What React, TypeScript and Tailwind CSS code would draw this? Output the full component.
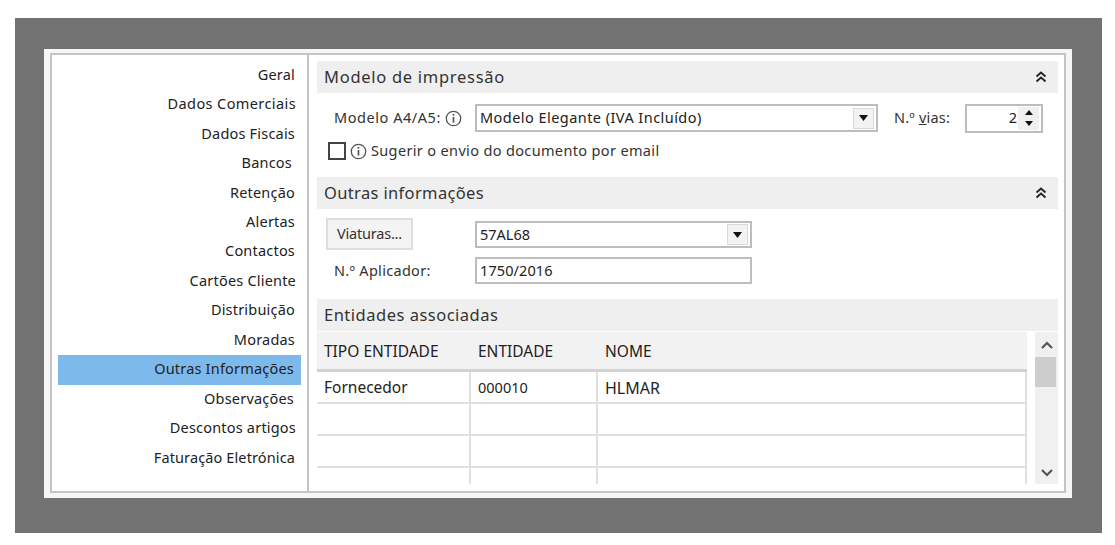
import React from 'react';

const menuItems = [
  { name: 'Geral', sty: 'pr-[6px]' },
  { name: 'Dados Comerciais', sty: 'pr-[5px] tracking-[0.4px]' },
  { name: 'Dados Fiscais', sty: 'pr-[6px]' },
  { name: 'Bancos', sty: 'pr-[9px]' },
  { name: 'Retenção', sty: 'pr-[6px]' },
  { name: 'Alertas', sty: 'pr-[6px]' },
  { name: 'Contactos', sty: 'pr-[6px]' },
  { name: 'Cartões Cliente', sty: 'pr-[5px]' },
  { name: 'Distribuição', sty: 'pr-[6px]' },
  { name: 'Moradas', sty: 'pr-[6px]' },
  { name: 'Outras Informações', sty: 'pr-[7px] tracking-[0.1px]', active: true },
  { name: 'Observações', sty: 'pr-[7px]' },
  { name: 'Descontos artigos', sty: 'pr-[5px]' },
  { name: 'Faturação Eletrónica', sty: 'pr-[6px] tracking-[0.12px]' },
];

const Info = () => (
  <svg width="17" height="17" viewBox="0 0 17 17" fill="none" className="shrink-0">
    <circle cx="8.5" cy="8.5" r="7.2" stroke="#555" strokeWidth="1.3" />
    <rect x="7.6" y="7" width="1.7" height="5.6" fill="#555" />
    <rect x="7.6" y="4" width="1.7" height="1.7" fill="#555" />
  </svg>
);

const Collapse = () => (
  <svg width="12" height="12" viewBox="0 0 12 12" fill="none" stroke="#222" strokeWidth="1.8">
    <path d="M1.5 5.5 6 1.5l4.5 4" />
    <path d="M1.5 10.5 6 6.5l4.5 4" />
  </svg>
);

const DropBtn = () => (
  <div className="flex h-full w-[21px] items-center justify-center border border-[#d9d9d9] bg-[#f3f3f3]">
    <svg width="9" height="6" viewBox="0 0 9 6"><path d="M0 0h9L4.5 6z" fill="#111" /></svg>
  </div>
);

const Section = ({ title, collapse, sty }: { title: string; collapse?: boolean; sty: string }) => (
  <div className={`flex h-[32px] items-center justify-between bg-[#efefef] pl-[7px] pr-[11px] text-[16.5px] text-[#333] ${sty}`}>
    <span>{title}</span>
    {collapse && <Collapse />}
  </div>
);

const rows = [['Fornecedor', '000010', 'HLMAR'], ['', '', ''], ['', '', '']];

const App = () => {
  return (
    <div className="h-[545px] w-[1115px] overflow-hidden bg-white pl-[15px] pt-[18px] text-[14.5px] text-[#222]" style={{ fontFamily: '"Noto Sans", "Open Sans", sans-serif' }}>
      <div className="h-[515px] w-[1087px] bg-[#727272] pl-[29px] pt-[31px]">
        <div className="h-[449px] w-[1028px] bg-[#f6f6f6] pl-[6px] pt-[4px]">
          <div className="flex h-[440px] w-[1016px] border-2 border-[#c4c4c4] bg-white">
            {/* 左侧导航 */}
            <div className="w-[257px] shrink-0 border-r-2 border-[#c4c4c4] pl-[6px] pr-[6px] pt-[6px]">
              {menuItems.map((item, index) => (
                <div
                  key={index}
                  className={`flex h-[29.45px] items-center justify-end pb-[2px] tracking-[0.2px] ${item.sty} ${item.active ? 'bg-[#7eb9eb]' : ''}`}
                >
                  {item.name}
                </div>
              ))}
            </div>

            <div className="w-[755px] shrink-0 pl-[8px] pr-[6px] pt-[6px]">
              <Section title="Modelo de impressão" collapse sty="tracking-[0.72px]" />

              <div className="mt-[11px] flex h-[28px] items-center pl-[17px]">
                <span className="w-[124px] tracking-[0.55px] text-[#333]">Modelo A4/A5:</span>
                <div className="-ml-[13px] mr-[13px]"><Info /></div>
                <div className="flex h-[28px] w-[403px] shrink-0 items-center justify-between border-2 border-[#bdbdbd] pl-[3px] pr-[2px] tracking-[0.45px]">
                  <span>Modelo Elegante (IVA Incluído)</span>
                  <div className="h-[21px]"><DropBtn /></div>
                </div>
                <span className="ml-[16px] w-[71px] tracking-[0.2px] text-[#333]">N.º <u>v</u>ias:</span>
                <div className="flex h-[29px] w-[78px] items-center justify-end border-2 border-[#bdbdbd] pr-[2px]">
                  <span className="mr-[1px]">2</span>
                  <div className="flex h-[23px] w-[21px] flex-col items-center justify-around bg-[#f0f0f0]">
                    <svg width="8" height="5" viewBox="0 0 8 5"><path d="M0 5h8L4 0z" fill="#111" /></svg>
                    <svg width="8" height="5" viewBox="0 0 8 5"><path d="M0 0h8L4 5z" fill="#111" /></svg>
                  </div>
                </div>
              </div>

              <div className="mt-[9px] flex h-[20px] items-center pl-[11px]">
                <div className="mr-[4px] h-[18px] w-[18px] border-2 border-[#444]" />
                <Info />
                <span className="ml-[4px] tracking-[0.35px] text-[#333]">Sugerir o envio do documento por email</span>
              </div>

              <div className="mt-[16px]"><Section title="Outras informações" collapse sty="tracking-[0.35px]" /></div>

              <div className="mt-[9px] flex h-[32px] items-center pl-[9px]">
                <button className="mr-[62px] h-[32px] w-[87px] shrink-0 border-2 border-[#dedede] bg-[#f4f4f4] tracking-[-0.2px] text-[#333]">Viaturas...</button>
                <div className="mt-px flex h-[27px] w-[277px] items-center justify-between border-2 border-[#bdbdbd] pl-[3px] pr-[2px]">
                  <span>57AL68</span>
                  <div className="h-[21px]"><DropBtn /></div>
                </div>
              </div>

              <div className="mt-[7px] flex h-[27px] items-center pl-[17px]">
                <span className="w-[141px] tracking-[0.3px] text-[#333]">N.º Aplicador:</span>
                <div className="flex h-[27px] w-[277px] items-center border-2 border-[#bdbdbd] pl-[3px] tracking-[0.1px]">1750/2016</div>
              </div>

              <div className="mt-[15px]"><Section title="Entidades associadas" sty="tracking-[0.5px]" /></div>

              <div className="mt-px flex">
                <div className="w-[710px] shrink-0">
                  <div className="flex h-[40px] items-center border-b-[3px] border-[#d2d2d2] bg-[#f2f2f2] pt-[2px] text-[15.5px]">
                    <span className="w-[154px] pl-[7px]">TIPO ENTIDADE</span>
                    <span className="w-[127px] pl-[7px]">ENTIDADE</span>
                    <span className="pl-[7px]">NOME</span>
                  </div>
                  {rows.map((row, index) => (
                    <div key={index} className="flex h-[32px] items-center border-b-2 border-r-2 border-[#e0e0e0] text-[15.5px]">
                      <span className="flex h-full w-[154px] items-center border-r-2 border-[#e0e0e0] pl-[7px] pt-[2px]">{row[0]}</span>
                      <span className="flex h-full w-[127px] items-center border-r-2 border-[#e0e0e0] pl-[7px] pt-[2px] text-[14.5px]">{row[1]}</span>
                      <span className="pl-[7px] pt-[2px] text-[16px]">{row[2]}</span>
                    </div>
                  ))}
                  <div className="flex h-[16px] border-r-2 border-[#e0e0e0]">
                    <span className="w-[154px] border-r-2 border-[#e0e0e0]" />
                    <span className="w-[127px] border-r-2 border-[#e0e0e0]" />
                  </div>
                </div>

                {/* 滚动条 */}
                <div className="ml-[8px] flex h-[152px] w-[23px] flex-col bg-[#f0f0f0]">
                  <div className="flex h-[25px] items-center justify-center">
                    <svg width="12" height="8" viewBox="0 0 12 8" fill="none" stroke="#555" strokeWidth="2.2"><path d="M1 7l5-5 5 5" /></svg>
                  </div>
                  <div className="h-[30px] w-[21px] bg-[#cdcdcd]" />
                  <div className="flex flex-1 items-end justify-center pb-[7px]">
                    <svg width="12" height="8" viewBox="0 0 12 8" fill="none" stroke="#555" strokeWidth="2.2"><path d="M1 1l5 5 5-5" /></svg>
                  </div>
                </div>
              </div>
            </div>
          </div>
        </div>
      </div>
    </div>
  );
};

export default App;
